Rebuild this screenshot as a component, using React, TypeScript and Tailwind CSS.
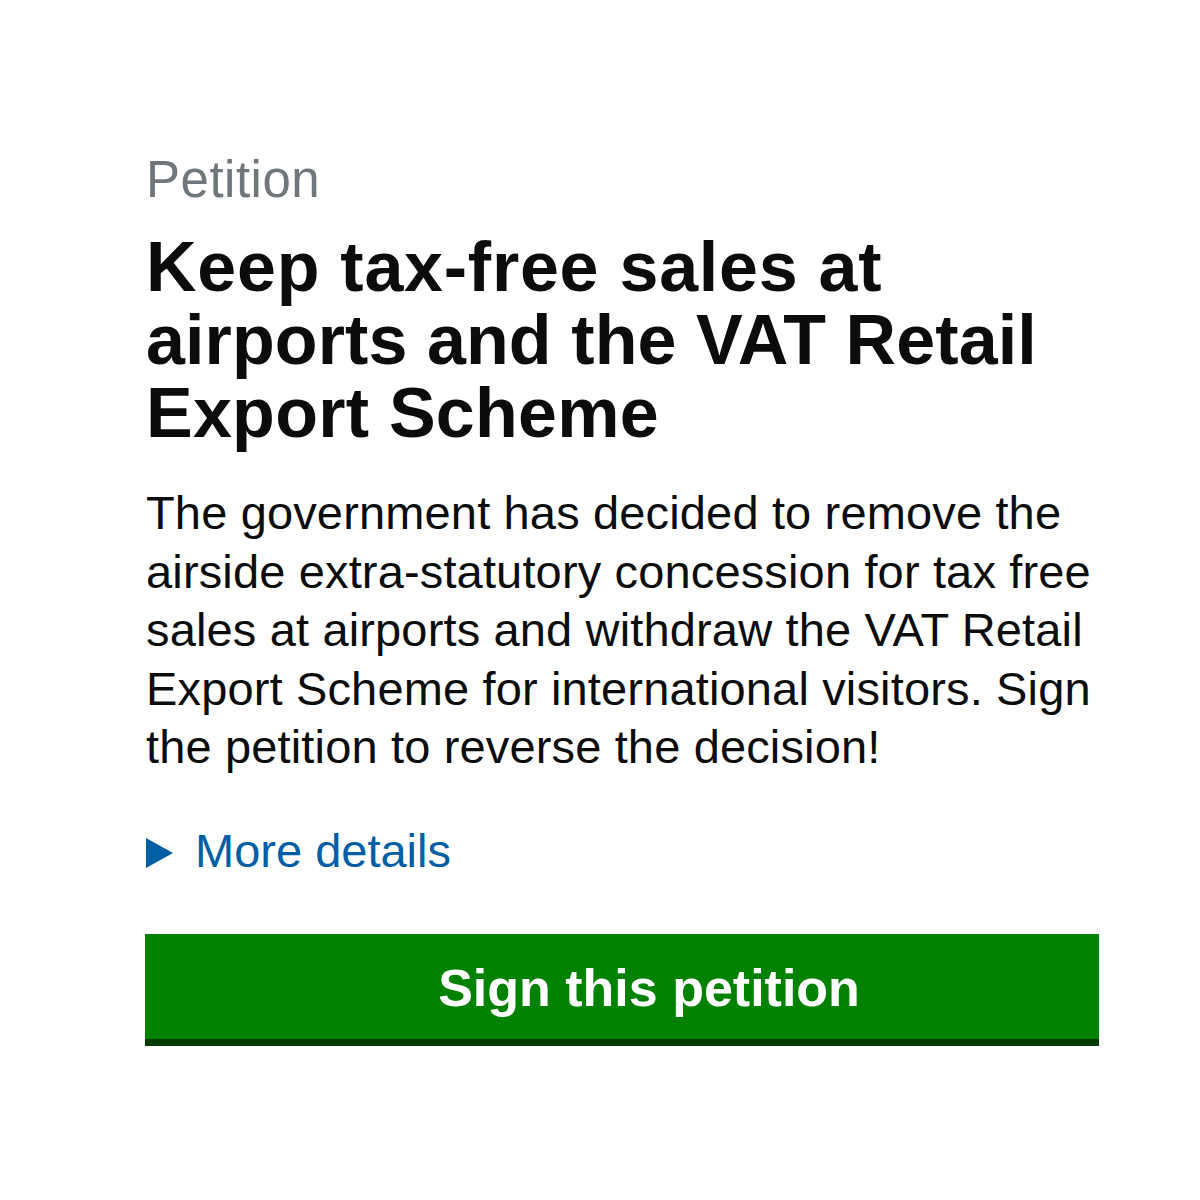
const App: React.FC = () => {
  return (
    <div className="min-h-[1200px] bg-white font-['Liberation_Sans',Arial,sans-serif] text-[#0b0c0c]">
      <div className="pl-[146px] pt-[152px] w-[1120px]">
        <p className="text-[51px] leading-[56px] tracking-[0.5px] text-[#6f777b]">Petition</p>
        <h1 className="mt-[23px] text-[70px] leading-[73px] font-bold">
          <span className="block tracking-[0.75px]">Keep tax-free sales at</span>
          <span className="block tracking-[0.1px]">airports and the VAT Retail</span>
          <span className="block tracking-[0.25px]">Export Scheme</span>
        </h1>
        <p className="mt-[34px] text-[47px] leading-[58.5px] tracking-[0.15px]">
          The government has decided to remove the
          <br />
          airside extra-statutory concession for tax free
          <br />
          sales at airports and withdraw the VAT Retail
          <br />
          Export Scheme for international visitors. Sign
          <br />
          the petition to reverse the decision!
        </p>
        <div className="mt-[46px] flex items-center h-[58px] text-[47px] text-[#005ea5]">
          <svg width="27" height="30" viewBox="0 0 27 30" className="mr-[22px] mt-[2px]">
            <path d="M0 0 L27 15 L0 30 Z" fill="#005ea5" />
          </svg>
          <span>More details</span>
        </div>
        <button className="mt-[53px] ml-[-1px] w-[954px] h-[105px] flex items-center justify-center pl-[54px] pt-[4px] bg-[#008200] text-white text-[52px] font-bold shadow-[0_7px_0_#003a00]">
          Sign this petition
        </button>
      </div>
    </div>
  );
};

export default App;
